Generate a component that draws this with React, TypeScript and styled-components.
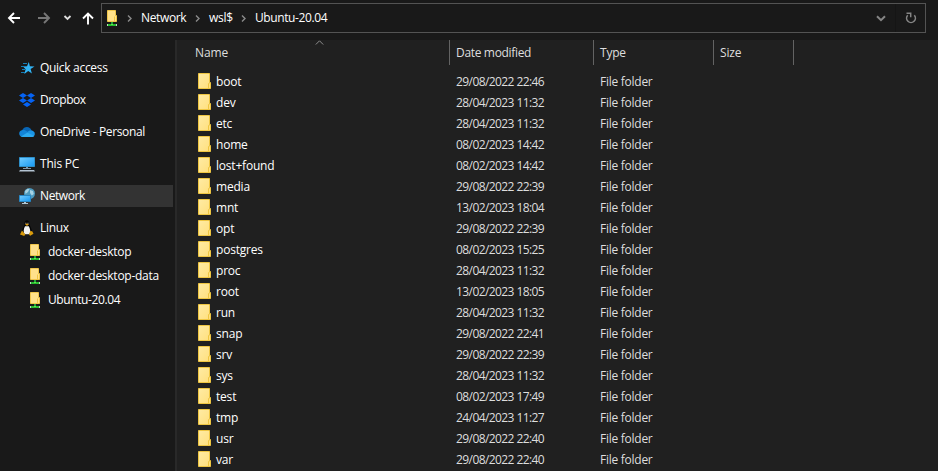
import React from 'react';
import styled, { createGlobalStyle } from 'styled-components';

const GlobalStyle = createGlobalStyle`
  * { box-sizing: border-box; }
  body { margin: 0; background: #191919; overflow: hidden; }
  svg { display: block; flex: none; }
`;

const Window = styled.div`
  display: flex;
  flex-direction: column;
  width: 938px;
  height: 471px;
  background: #191919;
  color: #fff;
  font: 12px/17px 'Open Sans', 'Noto Sans', sans-serif;
  overflow: hidden;
  cursor: default;
`;

const Toolbar = styled.header`
  display: flex;
  flex: none;
  height: 40px;
  padding-top: 3px;
`;

const NavButtons = styled.div`
  display: flex;
  width: 101px;
  height: 30px;
`;

const AddressBar = styled.div`
  display: flex;
  align-items: center;
  width: 825px;
  height: 30px;
  border: 1px solid #535353;
  padding-left: 5px;
`;

const Crumbs = styled.nav`
  display: flex;
  align-items: center;
  flex: 1;
`;

const Label = styled.span<{ $spacing?: number }>`
  white-space: pre;
  letter-spacing: ${(p) => p.$spacing ?? -0.2}px;
`;

const SideLabel = styled(Label)`
  margin-top: -1px;
`;

const Crumb = styled(SideLabel)<{ $width: number }>`
  width: ${(p) => p.$width}px;
`;

const AddressButton = styled.div<{ $divided?: boolean }>`
  display: flex;
  align-items: center;
  justify-content: center;
  width: 30px;
  height: 28px;
  border-left: 1px solid ${(p) => (p.$divided ? '#151515' : 'transparent')};
`;

const Body = styled.div`
  display: flex;
  flex: 1;
  min-height: 0;
`;

const Sidebar = styled.aside`
  width: 177px;
  padding-top: 17px;
  border-right: 2px solid #292929;
`;

const SideItem = styled.div<{ $selected?: boolean }>`
  display: flex;
  align-items: center;
  gap: 5px;
  width: 173px;
  height: 22px;
  margin-bottom: 10px;
  padding-left: 19px;
  background: ${(p) => (p.$selected ? '#333' : 'transparent')};
`;

const SideChildren = styled.div`
  margin-top: -9px;
`;

const SideChild = styled.div`
  display: flex;
  align-items: center;
  height: 24px;
  gap: 8px;
  padding-left: 30px;
`;

const Files = styled.main`
  flex: 1;
  background: #202020;
`;

const columns = '273px 144px 120px 80px';

const HeaderRow = styled.div`
  display: grid;
  grid-template-columns: ${columns};
  height: 25px;
  margin-bottom: 6px;
`;

const HeaderCell = styled.div<{ $first?: boolean }>`
  position: relative;
  display: flex;
  align-items: center;
  padding-left: ${(p) => (p.$first ? 18 : 6)}px;
  border-right: 1px solid #636363;
  color: #dedede;
`;

const SortMark = styled.span`
  position: absolute;
  left: 138px;
  top: 0;
`;

const FileRow = styled.div`
  display: grid;
  grid-template-columns: ${columns};
  height: 21px;
`;

const NameCell = styled.div`
  display: flex;
  align-items: center;
  gap: 5px;
  padding-left: 21px;
  svg { margin-top: -1px; }
`;

const Cell = styled.div`
  display: flex;
  align-items: center;
  padding-left: 6px;
  color: #dedede;
`;

const FolderIcon = () => (
  <svg width="13" height="16" viewBox="0 0 13 16">
    <defs>
      <linearGradient id="folder" x1="0" y1="0" x2="1" y2="1">
        <stop offset="0" stopColor="#ffeba4" />
        <stop offset="1" stopColor="#ffdf7c" />
      </linearGradient>
    </defs>
    <path d="M.5.5h11v9h1v6H.5z" fill="url(#folder)" stroke="#efc642" />
    <path d="M10.5 15V10.5h1" fill="none" stroke="#efc642" />
  </svg>
);

const NetFolderIcon = () => (
  <svg width="10" height="16" viewBox="0 0 10 16">
    <path d="M.5.5h8v5h1v6H.5z" fill="#ffe18a" stroke="#f0c64a" />
    <path d="M7.5 11V6.5" stroke="#efc642" />
    <path d="M4 12h2v2H4z" fill="#1ca63a" />
    <path d="M1 14h8v2H1z" fill="#25bb2e" />
    <path d="M0 14h1v2H0zM9 14h1v2H9z" fill="#b7dcbc" />
    <path d="M4 14h2v1H4z" fill="#67e34f" />
  </svg>
);

const StarIcon = () => (
  <svg width="16" height="16" viewBox="0 0 16 16">
    <path d="M9.8 2l1.1 4.2 4.6.2-3.9 2.5 1.3 4.6-3.7-2.6L5.3 14l1.3-4.7L4 6.4l4-.1z" fill="#31b4f5" />
    <path d="M4 3.5h4M2 6.5h4M3 9.5h3M2 12.5h4" stroke="#167db5" />
  </svg>
);

const DropboxIcon = () => (
  <svg width="16" height="16" viewBox="0 0 16 16" fill="#0563f5">
    <path d="M4 1l4 2.5L4 6 0 3.5zM12 1l4 2.5L12 6 8 3.5zM4 6l4 2.5L4 11 0 8.5zM12 6l4 2.5-4 2.5-4-2.5zM8 10l4 2.5L8 15l-4-2.5z" />
  </svg>
);

const CloudIcon = () => (
  <svg width="16" height="16" viewBox="0 0 16 16">
    <path d="M3 6.5C5 2 11 1.8 12.7 6.7L8 11z" fill="#0966b5" />
    <path d="M3.5 13C-.8 12.5-1 6.5 3.5 6c2-.3 3 .4 5 1.7L12 13z" fill="#1284d8" />
    <path d="M8.5 8c2-2 5.5-2 6.8.2 1.3 2.4 0 4.8-2.8 4.8z" fill="#1b95e5" />
    <path d="M2 12.5l6.5-4 6.7 3.4c-.6.8-1.4 1.1-2.7 1.1h-9c-.7 0-1.1-.2-1.5-.5z" fill="#2caaf0" />
  </svg>
);

const ScreenGradient = ({ id }: { id: string }) => (
  <linearGradient id={id} x1="0" y1="0" x2="1" y2="1">
    <stop offset="0" stopColor="#74cdff" />
    <stop offset="1" stopColor="#1598f2" />
  </linearGradient>
);

const PcIcon = () => (
  <svg width="16" height="16" viewBox="0 0 16 16">
    <defs><ScreenGradient id="pc" /></defs>
    <path d="M.5 1.5h15v9H.5z" fill="url(#pc)" stroke="#2e8fc9" />
    <path d="M7 11h2v1H7zM4 12h8v1H4z" fill="#8197a8" />
    <path d="M1 14h14l1 1.5H0z" fill="#b4c4d2" />
  </svg>
);

const NetworkIcon = () => (
  <svg width="16" height="16" viewBox="0 0 16 16">
    <defs><ScreenGradient id="net" /></defs>
    <circle cx="10.5" cy="5.5" r="5.5" fill="#4c99bd" />
    <path d="M6 3l2.5-2.3 2 .3L9 4 6.5 6zM11 2l3 1 .8 3-2 1.5L11 5z" fill="#a6d2e3" />
    <path d="M.5 7.5h11v6H.5z" fill="url(#net)" stroke="#2687c5" />
    <path d="M5 14h2v1H5zM3 15h6v1H3z" fill="#b0c6d4" />
  </svg>
);

const LinuxIcon = () => (
  <svg width="16" height="16" viewBox="0 0 16 16">
    <path d="M5.5 3.2C5.5-.5 10-.7 10.2 3c0 2.5 2.8 5 2.8 9l-1.5 2.5h-7L3 12c0-4 2.6-5.6 2.5-8.8z" fill="#050505" />
    <path d="M6 6.2h3.8c1.6 3 2 5.5.6 8H5.7C4 12 4.6 9 6 6.2z" fill="#f4f4f4" />
    <path d="M6.3 2.8h1v1h-1zM8.5 2.8h1v1h-1z" fill="#aaa" />
    <path d="M6 4.3l2-.7 2 .7L8 6z" fill="#d99b15" />
    <path d="M3 10.5l3.2 3.8-.9 1.7L1 14.6zM11.2 11l2 .3 1.3 2.5-3.3 2-1.2-1z" fill="#d99b0b" />
  </svg>
);

const CrumbChevron = () => (
  <svg width="14" height="7" viewBox="0 0 5 7" preserveAspectRatio="xMinYMid">
    <path d="M1 .5l3 3-3 3" fill="none" stroke="#8a8a8a" strokeWidth="1.4" />
  </svg>
);

const NavIcons = () => (
  <svg width="101" height="30" viewBox="0 0 101 30" fill="none" strokeWidth="1.9">
    <path d="M20 15H9M14 10l-5 5 5 5" stroke="#fff" />
    <path d="M38 15h11M44 10l5 5-5 5" stroke="#777" />
    <path d="M64.5 13l3 3 3-3" stroke="#dedede" strokeWidth="1.8" />
    <path d="M88 21.5V11M83 15.5l5-5 5 5" stroke="#fff" />
  </svg>
);

const places = [
  { name: 'Quick access', Icon: StarIcon, spacing: -0.3 },
  { name: 'Dropbox', Icon: DropboxIcon, spacing: -0.5 },
  { name: 'OneDrive - Personal', Icon: CloudIcon, spacing: -0.36 },
  { name: 'This PC', Icon: PcIcon, spacing: -0.2 },
  { name: 'Network', Icon: NetworkIcon, selected: true, spacing: -0.4 },
  { name: 'Linux', Icon: LinuxIcon, spacing: -0.3 },
];

const distros = [
  { name: 'docker-desktop', spacing: -0.27 },
  { name: 'docker-desktop-data', spacing: -0.26 },
  { name: 'Ubuntu-20.04', spacing: -0.4 },
];

const files: [string, string][] = [
  ['boot', '29/08/2022 22:46'],
  ['dev', '28/04/2023 11:32'],
  ['etc', '28/04/2023 11:32'],
  ['home', '08/02/2023 14:42'],
  ['lost+found', '08/02/2023 14:42'],
  ['media', '29/08/2022 22:39'],
  ['mnt', '13/02/2023 18:04'],
  ['opt', '29/08/2022 22:39'],
  ['postgres', '08/02/2023 15:25'],
  ['proc', '28/04/2023 11:32'],
  ['root', '13/02/2023 18:05'],
  ['run', '28/04/2023 11:32'],
  ['snap', '29/08/2022 22:41'],
  ['srv', '29/08/2022 22:39'],
  ['sys', '28/04/2023 11:32'],
  ['test', '08/02/2023 17:49'],
  ['tmp', '24/04/2023 11:27'],
  ['usr', '29/08/2022 22:40'],
  ['var', '29/08/2022 22:40'],
];

export default function App() {
  return (
    <Window>
      <GlobalStyle />
      <Toolbar>
        <NavButtons><NavIcons /></NavButtons>
        <AddressBar>
          <Crumbs>
            <NetFolderIcon />
            <Crumb $width={10}> </Crumb>
            <CrumbChevron />
            <Crumb $width={54} $spacing={-0.35}>Network</Crumb>
            <CrumbChevron />
            <Crumb $width={32} $spacing={-0.3}>wsl$</Crumb>
            <CrumbChevron />
            <Crumb $width={90} $spacing={-0.4}>Ubuntu-20.04</Crumb>
          </Crumbs>
          <AddressButton>
            <svg width="10" height="7" viewBox="0 0 10 7">
              <path d="M1 1.2l4 4 4-4" fill="none" stroke="#858585" strokeWidth="2" />
            </svg>
          </AddressButton>
          <AddressButton $divided>
            <svg width="12" height="12" viewBox="0 0 12 12" fill="none" stroke="#858585" strokeWidth="1.6">
              <path d="M9.3 3.2A4.4 4.4 0 1 1 2.7 3.2" />
              <path d="M1.5 1.2h4.2v4" strokeWidth="1.5" />
            </svg>
          </AddressButton>
        </AddressBar>
      </Toolbar>
      <Body>
        <Sidebar>
          {places.map(({ name, Icon, selected, spacing }) => (
            <SideItem key={name} $selected={selected}>
              <Icon />
              <SideLabel $spacing={spacing}>{name}</SideLabel>
            </SideItem>
          ))}
          <SideChildren>
            {distros.map(({ name, spacing }) => (
              <SideChild key={name}>
                <NetFolderIcon />
                <SideLabel $spacing={spacing}>{name}</SideLabel>
              </SideChild>
            ))}
          </SideChildren>
        </Sidebar>
        <Files>
          <HeaderRow>
            <HeaderCell $first>
              <Label $spacing={-0.1}>Name</Label>
              <SortMark>
                <svg width="9" height="5" viewBox="0 0 9 5">
                  <path d="M.8 4.5l3.7-3.7 3.7 3.7" fill="none" stroke="#8d8d8d" />
                </svg>
              </SortMark>
            </HeaderCell>
            <HeaderCell><Label $spacing={-0.33}>Date modified</Label></HeaderCell>
            <HeaderCell><Label>Type</Label></HeaderCell>
            <HeaderCell><Label>Size</Label></HeaderCell>
          </HeaderRow>
          {files.map(([name, date]) => (
            <FileRow key={name}>
              <NameCell>
                <FolderIcon />
                <Label>{name}</Label>
              </NameCell>
              <Cell><Label $spacing={-0.58}>{date}</Label></Cell>
              <Cell><Label $spacing={-0.26}>File folder</Label></Cell>
            </FileRow>
          ))}
        </Files>
      </Body>
    </Window>
  );
}
